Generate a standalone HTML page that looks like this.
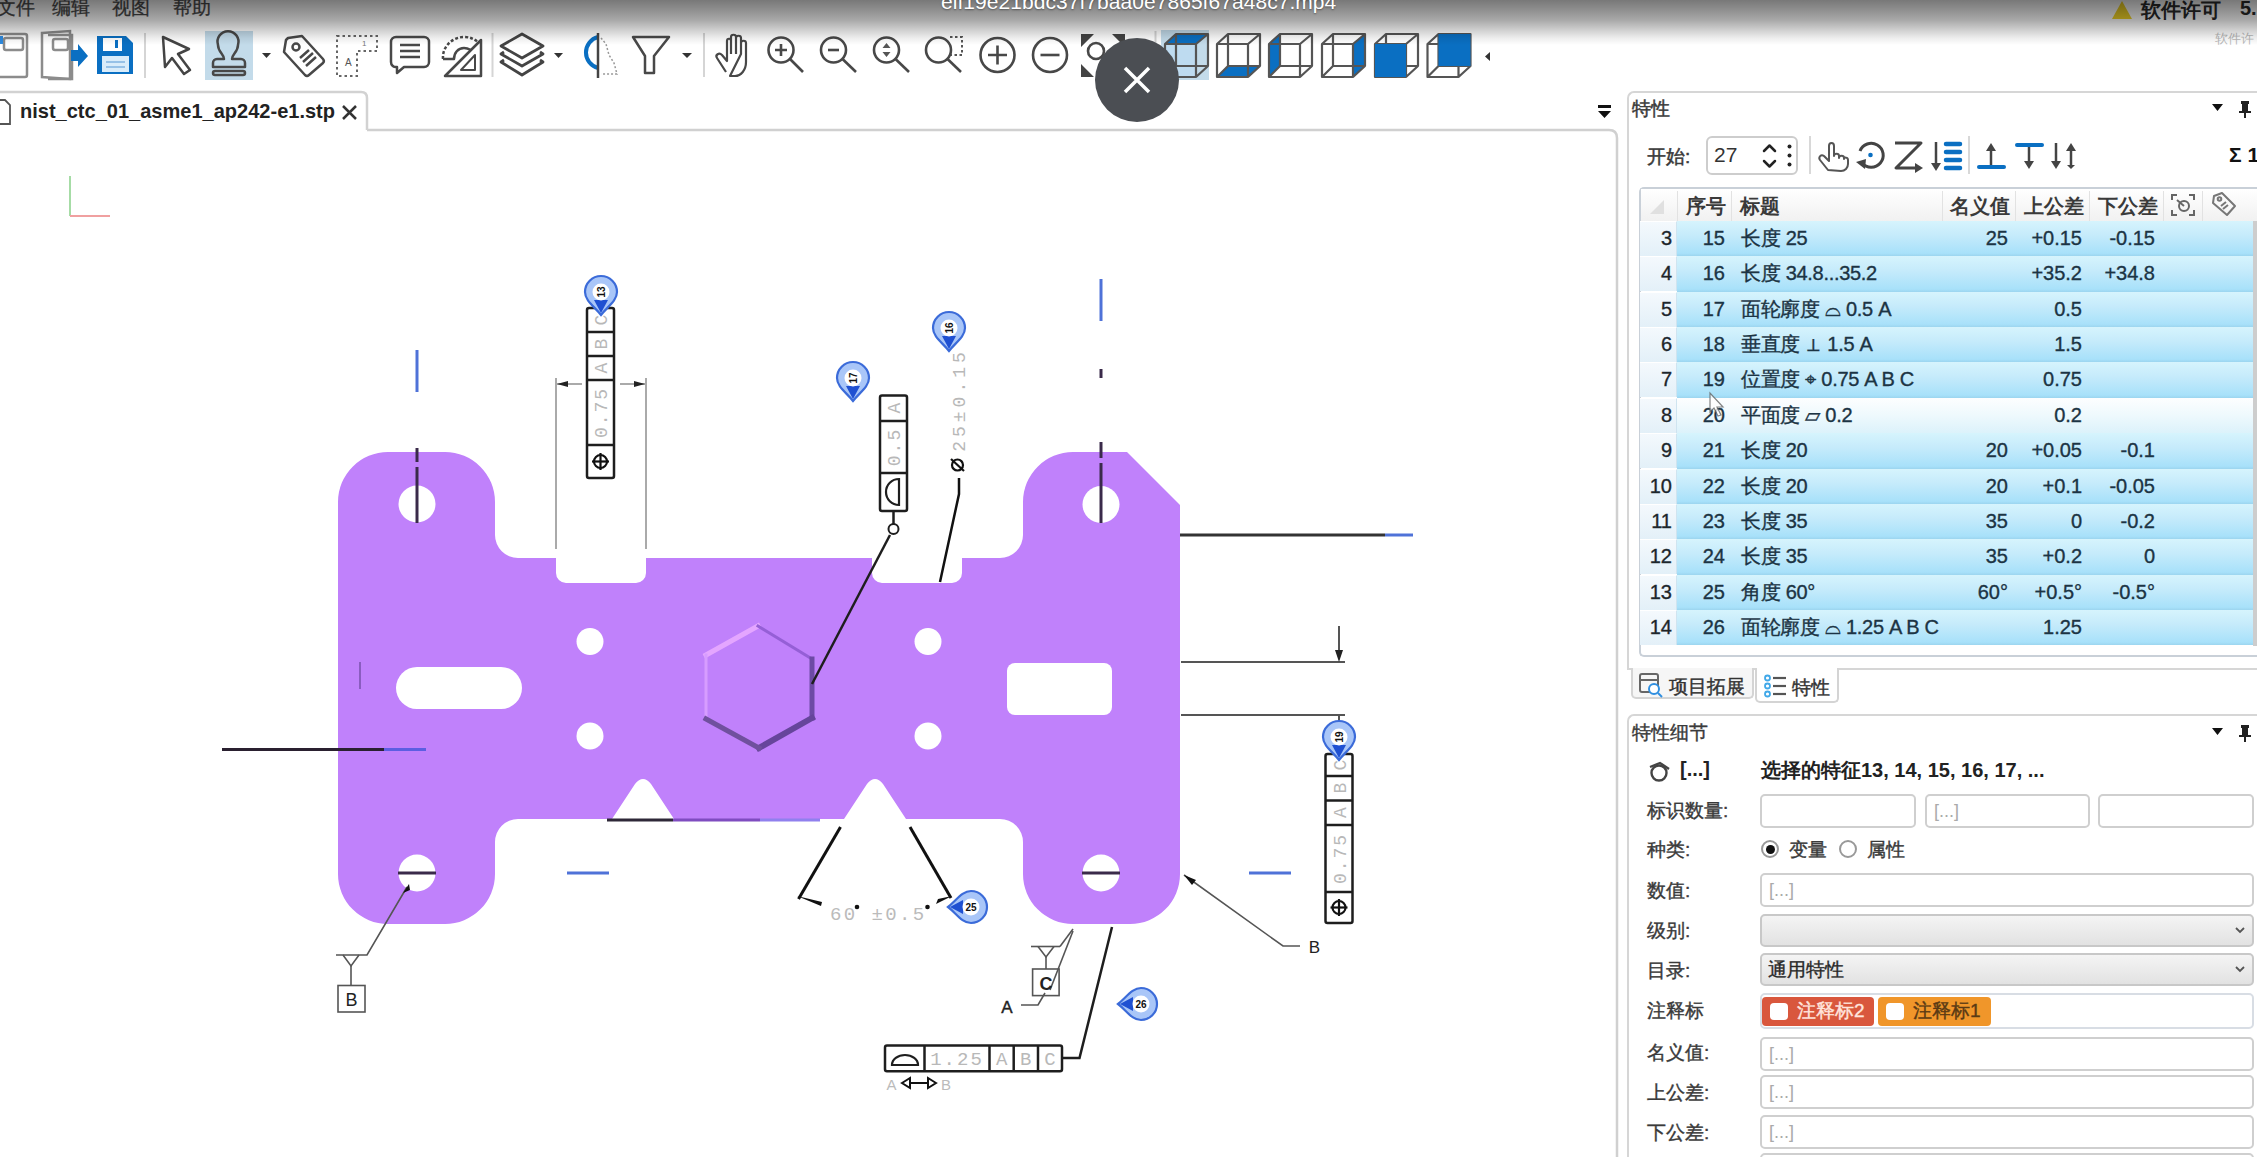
<!DOCTYPE html>
<html><head><meta charset="utf-8">
<style>
*{box-sizing:border-box;margin:0;padding:0}
html,body{width:2257px;height:1157px;overflow:hidden;background:#fff;font-family:"Liberation Sans",sans-serif;color:#333}
.a{position:absolute;white-space:nowrap}
svg{position:absolute;left:0;top:0}
#ov{position:absolute;left:0;top:0;width:2257px;height:46px;background:linear-gradient(to bottom,rgba(0,0,0,.53) 0px,rgba(0,0,0,.44) 10px,rgba(0,0,0,.34) 20px,rgba(0,0,0,.19) 30px,rgba(0,0,0,.07) 38px,rgba(0,0,0,0) 45px)}
</style></head><body>

<!-- DRAWING -->
<svg id="draw" width="2257" height="1157" viewBox="0 0 2257 1157">
<defs>
<g id="bd"><path d="M0,23 C-6,15 -16,9 -16,0 A16,16 0 1 1 16,0 C16,9 6,15 0,23Z" fill="#a9c6f8" stroke="#3b6bd9" stroke-width="2.2"/><path d="M-7,8 L0,21 L7,8Z" fill="#1f50d2"/><circle cx="0" cy="0" r="8.5" fill="#fff"/></g>
<g id="bl"><path d="M-23,0 C-15,-6 -9,-16 0,-16 A16,16 0 1 1 0,16 C-9,16 -15,6 -23,0Z" fill="#a9c6f8" stroke="#3b6bd9" stroke-width="2.2"/><path d="M-8,-7 L-21,0 L-8,7Z" fill="#1f50d2"/><circle cx="0" cy="0" r="8.5" fill="#fff"/></g>
</defs>
<!-- viewport border -->
<path d="M367,130 H1609 Q1617,130 1617,138 V1157" fill="none" stroke="#d0d0d0" stroke-width="2.5"/>
<!-- axes -->
<line x1="70" y1="176" x2="70" y2="216" stroke="#a6dca6" stroke-width="2"/>
<line x1="70" y1="216" x2="110" y2="216" stroke="#f0a0a0" stroke-width="2"/>
<!-- part -->
<path fill="#c081fb" d="M338,502 A50,50 0 0 1 388,452 H445 A50,50 0 0 1 495,502 V535 A23,23 0 0 0 518,558 H556 V573 A10,10 0 0 0 566,583 H636 A10,10 0 0 0 646,573 V558 H872 V573 A10,10 0 0 0 882,583 H952 A10,10 0 0 0 962,573 V558 H1000 A23,23 0 0 0 1023,535 V502 A50,50 0 0 1 1073,452 H1127 L1180,505 V874 A50,50 0 0 1 1130,924 H1073 A50,50 0 0 1 1023,874 V842 A23,23 0 0 0 1000,819 H906 L883,784 Q875,774 867,784 L844,819 H674 L651,784 Q643,774 635,784 L612,819 H518 A23,23 0 0 0 495,842 V874 A50,50 0 0 1 445,924 H388 A50,50 0 0 1 338,874 Z"/>
<g fill="#fff">
<circle cx="417" cy="504" r="18.5"/><circle cx="1101" cy="504.5" r="18.5"/>
<circle cx="417" cy="873" r="18.5"/><circle cx="1101" cy="873" r="18.5"/>
<circle cx="590" cy="641.5" r="13.5"/><circle cx="590" cy="736" r="13.5"/>
<circle cx="928" cy="641.5" r="13.5"/><circle cx="928" cy="736" r="13.5"/>
<rect x="396" y="667" width="126" height="42" rx="21"/>
<rect x="1007" y="663" width="105" height="52" rx="8"/>
</g>
<!-- hexagon -->
<g fill="none" stroke-linecap="square">
<line x1="706" y1="655" x2="758" y2="626" stroke="#e4a6ff" stroke-width="5"/>
<line x1="706" y1="655" x2="706" y2="719" stroke="#d79cff" stroke-width="3"/>
<line x1="758" y1="626" x2="812" y2="659" stroke="#955fd6" stroke-width="3"/>
<line x1="812" y1="659" x2="812" y2="718" stroke="#6d4aa5" stroke-width="5"/>
<line x1="812" y1="718" x2="759" y2="748" stroke="#66459b" stroke-width="6"/>
<line x1="759" y1="748" x2="706" y2="719" stroke="#70509e" stroke-width="5"/>
</g>
<!-- center lines -->
<g stroke="#3a2a4a" stroke-width="3">
<line x1="417" y1="448" x2="417" y2="462"/><line x1="417" y1="467" x2="417" y2="523"/>
<line x1="1101" y1="442" x2="1101" y2="458"/><line x1="1101" y1="463" x2="1101" y2="523"/>
<line x1="1101" y1="369" x2="1101" y2="378"/>
<line x1="398" y1="873" x2="436" y2="873"/><line x1="1082" y1="873" x2="1120" y2="873"/>
</g>
<g stroke="#4f72d8" stroke-width="3">
<line x1="417" y1="350" x2="417" y2="392"/>
<line x1="1101" y1="279" x2="1101" y2="321"/>
<line x1="567" y1="873" x2="609" y2="873"/>
<line x1="1249" y1="873" x2="1291" y2="873"/>
<line x1="384" y1="749.5" x2="426" y2="749.5" stroke="#5c5ee2"/>
<line x1="1385" y1="535" x2="1413" y2="535"/>
</g>
<line x1="222" y1="749.5" x2="384" y2="749.5" stroke="#2a2030" stroke-width="3"/>
<line x1="360" y1="662" x2="360" y2="689" stroke="#8a5cc0" stroke-width="2"/>
<line x1="1180" y1="535" x2="1385" y2="535" stroke="#333" stroke-width="3"/>
<line x1="607" y1="820" x2="673" y2="820" stroke="#2e2838" stroke-width="3"/><line x1="673" y1="820" x2="760" y2="820" stroke="#7f4cc0" stroke-width="3"/><line x1="760" y1="820" x2="820" y2="820" stroke="#9080ee" stroke-width="3"/>
<!-- right ext lines -->
<g stroke="#555" stroke-width="2" fill="none">
<line x1="1181" y1="662" x2="1345" y2="662"/>
<line x1="1181" y1="715" x2="1345" y2="715"/>
<line x1="1339" y1="626" x2="1339" y2="655"/>
<line x1="1339" y1="715" x2="1339" y2="728"/>
</g>
<path d="M1335,650 L1339,662 L1343,650Z" fill="#222"/>
<!-- FCF 13 dims -->
<g stroke="#aaa" stroke-width="2" fill="none">
<line x1="556" y1="378" x2="556" y2="549"/><line x1="646" y1="378" x2="646" y2="549"/>
<line x1="556" y1="384" x2="582" y2="384"/><line x1="620" y1="384" x2="646" y2="384"/>
</g>
<path d="M557,384 L568,381 L568,387Z M645,384 L634,381 L634,387Z" fill="#222"/>
<!-- FCF 13 -->
<g fill="none" stroke="#1e1e1e" stroke-width="2.5">
<rect x="587" y="308" width="27" height="170" rx="2"/>
<line x1="587" y1="332" x2="614" y2="332"/><line x1="587" y1="356" x2="614" y2="356"/>
<line x1="587" y1="380" x2="614" y2="380"/><line x1="587" y1="445" x2="614" y2="445"/>
</g>
<g fill="#b8b8b8" font-family="Liberation Mono" font-size="18" text-anchor="middle">
<text transform="translate(607,320) rotate(-90)">C</text>
<text transform="translate(607,344) rotate(-90)">B</text>
<text transform="translate(607,368) rotate(-90)">A</text>
<text transform="translate(607,412.5) rotate(-90)" letter-spacing="2">0.75</text>
</g>
<g stroke="#111" stroke-width="2.2" fill="none"><circle cx="600.5" cy="461.5" r="6.5"/><line x1="592" y1="461.5" x2="609" y2="461.5"/><line x1="600.5" y1="453" x2="600.5" y2="470"/></g>
<!-- FCF 19 -->
<g fill="none" stroke="#1e1e1e" stroke-width="2.5">
<rect x="1325.5" y="754" width="27" height="169" rx="2"/>
<line x1="1325.5" y1="776" x2="1352.5" y2="776"/><line x1="1325.5" y1="800.5" x2="1352.5" y2="800.5"/>
<line x1="1325.5" y1="825" x2="1352.5" y2="825"/><line x1="1325.5" y1="892" x2="1352.5" y2="892"/>
</g>
<g fill="#b8b8b8" font-family="Liberation Mono" font-size="18" text-anchor="middle">
<text transform="translate(1345.5,765) rotate(-90)">C</text>
<text transform="translate(1345.5,788) rotate(-90)">B</text>
<text transform="translate(1345.5,812.5) rotate(-90)">A</text>
<text transform="translate(1345.5,858.5) rotate(-90)" letter-spacing="2">0.75</text>
</g>
<g stroke="#111" stroke-width="2.2" fill="none"><circle cx="1339" cy="907.5" r="6.5"/><line x1="1330.5" y1="907.5" x2="1347.5" y2="907.5"/><line x1="1339" y1="899" x2="1339" y2="916"/></g>
<!-- FCF 17 -->
<g fill="none" stroke="#1e1e1e" stroke-width="2.5">
<rect x="880" y="395.5" width="27" height="115.5" rx="2"/>
<line x1="880" y1="421" x2="907" y2="421"/><line x1="880" y1="473" x2="907" y2="473"/>
<path d="M899,479 V505 A13,13 0 0 1 899,479 Z" stroke-width="2.2"/>
<line x1="893.5" y1="511" x2="893.5" y2="524"/>
<circle cx="893.5" cy="529" r="5" stroke-width="2"/>
<line x1="890" y1="535" x2="812" y2="684"/>
</g>
<g fill="#b8b8b8" font-family="Liberation Mono" font-size="18" text-anchor="middle">
<text transform="translate(900,408) rotate(-90)">A</text>
<text transform="translate(900,447) rotate(-90)" letter-spacing="2">0.5</text>
<text transform="translate(965,400) rotate(-90)" letter-spacing="4">25&#177;0.15</text>
</g>
<g stroke="#111" stroke-width="2.2" fill="none"><circle cx="957.5" cy="465" r="5.5"/><line x1="951" y1="459" x2="964" y2="471"/>
<path d="M959,478 V494 L940,582" stroke-width="2.5"/></g>
<!-- angle dim -->
<g stroke="#111" stroke-width="3" fill="none">
<line x1="840.5" y1="827" x2="798.5" y2="899"/>
<line x1="910" y1="827" x2="951" y2="898"/>
</g>
<path d="M797,896 L822,902 L821,906 Z M952,896 L938,899 L936,904Z" fill="#111"/>
<text x="830" y="920" font-family="Liberation Mono" font-size="19" fill="#bbb" letter-spacing="2.4">60 &#177;0.5</text>
<circle cx="857" cy="907" r="2.3" fill="#111"/><circle cx="927.5" cy="907" r="2.3" fill="#111"/>
<!-- datum B left -->
<g stroke="#555" stroke-width="1.6" fill="none">
<path d="M407,887 L367,955 H336"/>
<path d="M343,955 L351,966 L359,955"/>
<line x1="351" y1="966" x2="351" y2="985"/>
<rect x="338" y="985.5" width="27" height="26.5"/>
</g>
<path d="M403,893 L409,884 L410,890Z" fill="#111"/>
<text x="351.5" y="1006" font-size="18" text-anchor="middle" fill="#222">B</text>
<!-- leader B right -->
<path d="M1184,875 L1283,946 H1300" stroke="#555" stroke-width="1.6" fill="none"/>
<path d="M1184,875 L1196,880 L1192,885Z" fill="#111"/>
<text x="1314.5" y="953" font-size="17" text-anchor="middle" fill="#222">B</text>
<!-- datum C -->
<g stroke="#555" stroke-width="1.6" fill="none">
<line x1="1031" y1="946.5" x2="1060" y2="946.5"/>
<path d="M1038,946.5 L1046,957 L1054,946.5"/>
<line x1="1046" y1="957" x2="1046" y2="969"/>
<rect x="1032.6" y="969" width="26.5" height="26.6"/>
<path d="M1060,946.5 L1073,929"/><path d="M1050,990 L1073,931"/>
<path d="M1021,1005 H1038 L1045,993"/>
</g>
<text x="1046" y="990" font-size="18" font-weight="bold" text-anchor="middle" fill="#222">C</text>
<text x="1007" y="1013" font-size="17" text-anchor="middle" fill="#222" stroke="#222" stroke-width="0.4">A</text>
<!-- FCF bottom -->
<g fill="none" stroke="#1e1e1e" stroke-width="2.5">
<rect x="885" y="1045.6" width="177" height="25.7" rx="2"/>
<line x1="924.5" y1="1045.6" x2="924.5" y2="1071.3"/><line x1="989.5" y1="1045.6" x2="989.5" y2="1071.3"/>
<line x1="1013.7" y1="1045.6" x2="1013.7" y2="1071.3"/><line x1="1038" y1="1045.6" x2="1038" y2="1071.3"/>
<path d="M892,1065 A13,10 0 0 1 918,1065 Z" stroke-width="2.2"/>
<path d="M1062,1058 H1079.5 L1112,927"/>
</g>
<g fill="#b8b8b8" font-family="Liberation Mono" font-size="19" text-anchor="middle">
<text x="957" y="1065" letter-spacing="2">1.25</text>
<text x="1001.6" y="1065">A</text><text x="1025.8" y="1065">B</text><text x="1050" y="1065">C</text>
</g>
<text x="891.5" y="1090" font-size="15" fill="#bbb" text-anchor="middle">A</text>
<text x="946" y="1090" font-size="15" fill="#bbb" text-anchor="middle">B</text>
<path d="M902,1083 L910,1078 V1088Z M936,1083 L928,1078 V1088Z" fill="none" stroke="#111" stroke-width="2"/>
<line x1="909" y1="1083" x2="929" y2="1083" stroke="#111" stroke-width="2"/>
<!-- balloons -->
<g font-size="10" font-weight="bold" text-anchor="middle" fill="#111">
<g transform="translate(601,292)"><use href="#bd"/><text transform="rotate(-90)" y="3.5" x="0">13</text></g>
<g transform="translate(853,378)"><use href="#bd"/><text transform="rotate(-90)" y="3.5" x="0">17</text></g>
<g transform="translate(949,328)"><use href="#bd"/><text transform="rotate(-90)" y="3.5" x="0">16</text></g>
<g transform="translate(1339,737)"><use href="#bd"/><text transform="rotate(-90)" y="3.5" x="0">19</text></g>
<g transform="translate(971,907)"><use href="#bl"/><text x="0" y="3.5">25</text></g>
<g transform="translate(1141,1004)"><use href="#bl"/><text x="0" y="3.5">26</text></g>
</g>
</svg>

<!-- TOOLBAR -->
<svg id="tb" width="2257" height="135" viewBox="0 0 2257 135">
<defs>
<g id="cube" fill="none" stroke="#555" stroke-width="2.2" stroke-linejoin="round">
<path d="M0,10 H31 V43 H0Z M11,0 H43 V32 H11Z M0,10 L11,0 M31,10 L43,0 M31,43 L43,32 M0,43 L11,32"/>
</g>
</defs>
<g fill="#4a4a4a" font-size="19" stroke="#4a4a4a" stroke-width="0.3"><text x="-3" y="14">文件</text><text x="52" y="14">编辑</text><text x="112" y="14">视图</text><text x="173" y="14">帮助</text></g>
<!-- new -->
<g fill="none" stroke="#8c8c8c" stroke-width="2.5"><rect x="-3" y="34" width="30" height="43" rx="2"/><rect x="4" y="38" width="19" height="12" rx="2"/></g>
<rect x="0" y="36" width="3" height="8" fill="#2f8be0"/>
<!-- open -->
<g fill="none" stroke="#8c8c8c" stroke-width="2.5"><path d="M42,33 L70,31 V79 L42,77Z"/><path d="M48,35 H72 V79 H48"/><rect x="53" y="39" width="15" height="11" rx="2"/></g>
<path d="M71,50 H78 V44 L88,56 L78,67 V61 H71Z" fill="#0a6fc2"/>
<!-- save -->
<path d="M97,36 H126 L133,43 V74 H97Z" fill="#0a6fc2"/>
<rect x="103" y="38" width="19" height="13" fill="#fff"/><rect x="115" y="40" width="3" height="8" fill="#0a6fc2"/>
<rect x="102" y="56" width="27" height="16" fill="#d9ecfa"/>
<g stroke="#7fb3e0" stroke-width="1.5"><line x1="106" y1="62" x2="125" y2="62"/><line x1="106" y1="67" x2="125" y2="67"/></g>
<g stroke="#d5d5d5" stroke-width="2"><line x1="145" y1="33" x2="145" y2="78"/><line x1="492.5" y1="33" x2="492.5" y2="77"/><line x1="704" y1="33" x2="704" y2="77"/><line x1="1155.5" y1="31" x2="1155.5" y2="79"/><line x1="1809" y1="0" x2="1809" y2="0"/></g>
<!-- cursor -->
<path d="M163,37 L189,49 L178,54 L190,70 L184,74 L172,58 L165,67Z" fill="none" stroke="#444" stroke-width="2.5" stroke-linejoin="round"/>
<!-- stamp -->
<rect x="205" y="31" width="48" height="49" fill="#c3dbea"/>
<g fill="none" stroke="#484848" stroke-width="2.5" stroke-linejoin="round"><path d="M224,59 C224,54 218,52 218,45 A10.5,10.5 0 1 1 238,45 C238,52 232,54 232,59 H241 A4,4 0 0 1 245,63 V67 H213 V63 A4,4 0 0 1 217,59Z"/><path d="M215,71 H243 A2,2 0 0 1 243,75 H215 A2,2 0 0 1 215,71Z"/></g>
<g fill="#333"><path d="M262,53 H271 L266.5,58Z"/><path d="M554,53 H563 L558.5,58Z"/><path d="M682,53 H692 L687,58Z"/></g>
<!-- tag -->
<g fill="none" stroke="#484848" stroke-width="2.5" stroke-linejoin="round"><path d="M288,38 L302,36 L323,59 A3,3 0 0 1 323,63 L309,75 A3,3 0 0 1 305,75 L284,52 L286,40Z" transform="rotate(0)"/><circle cx="296" cy="47" r="3.5"/><path d="M300,58 L309,50 M303,62 L313,53 M306,66 L316,57"/></g>
<!-- dotted box -->
<g fill="none" stroke="#666" stroke-width="2" stroke-dasharray="2.5,3"><path d="M337,36 H377 V51 H357 V76 H337Z"/></g>
<text x="345" y="66" font-size="10" fill="#555">A</text><text x="362" y="46" font-size="8" fill="#777">1</text>
<!-- comment -->
<g fill="none" stroke="#484848" stroke-width="2.5" stroke-linejoin="round"><path d="M396,37 H424 A5,5 0 0 1 429,42 V62 A5,5 0 0 1 424,67 H404 L397,73 V67 A5,5 0 0 1 391,62 V42 A5,5 0 0 1 396,37Z"/><path d="M400,45 H420 M400,51 H420 M400,57 H420"/></g>
<!-- ruler -->
<g fill="none" stroke="#484848" stroke-width="2.5" stroke-linejoin="round"><path d="M481,40 V76 H445Z"/><path d="M475,55 V70 H461Z" stroke-width="2"/><path d="M443,59 C442,47 452,37 464,37 C470,37 474,39 478,42" stroke-dasharray="3,2"/><path d="M443,59 H454 C454,53 458,48 464,48 C467,48 469,49 471,50"/></g>
<!-- layers -->
<g fill="none" stroke="#444" stroke-width="2.8" stroke-linejoin="round"><path d="M522,34 L543,46 L522,58 L501,46Z"/><path d="M504,52 L501,54 L522,66 L543,54 L540,52"/><path d="M504,60 L501,62 L522,75 L543,62 L540,60"/></g>
<!-- section -->
<path d="M598,37 A16,16 0 0 0 598,68" fill="none" stroke="#0a6fc2" stroke-width="4"/>
<line x1="598" y1="33" x2="598" y2="78" stroke="#444" stroke-width="2.5"/>
<path d="M601,38 L606,44 L609,55 L614,63 L617,74 L601,74" fill="none" stroke="#999" stroke-width="1.5" stroke-dasharray="2,2"/>
<!-- funnel -->
<path d="M633,37 H669 L654,56 V73 H645 V56Z" fill="none" stroke="#484848" stroke-width="2.5" stroke-linejoin="round"/>
<!-- hand -->
<path d="M726,72 L717,58 C715,55 719,52 722,55 L727,61 V41 C727,38 731,38 731,41 V54 M731,54 V37 C731,34 736,34 736,37 V54 M736,54 V38 C736,35 741,35 741,38 V54 M741,54 V43 C741,40 746,40 746,43 V62 C746,70 741,76 735,76 H730Z" fill="none" stroke="#484848" stroke-width="2.2" stroke-linejoin="round"/>
<!-- zooms -->
<g fill="none" stroke="#484848" stroke-width="2.6">
<circle cx="781" cy="50" r="12.5"/><line x1="790" y1="59" x2="803" y2="72"/><path d="M775,50 H787 M781,44 V56"/>
<circle cx="833.5" cy="50" r="12.5"/><line x1="842.5" y1="59" x2="856" y2="72"/><path d="M828,50 H839"/>
<circle cx="886.5" cy="50" r="12.5"/><line x1="895.5" y1="59" x2="909" y2="72"/>
<circle cx="938.5" cy="50" r="12.5"/><line x1="947.5" y1="59" x2="961" y2="72"/>
<circle cx="997.5" cy="55" r="17"/><path d="M988,55 H1007 M997.5,45.5 V64.5"/>
<circle cx="1050" cy="55" r="17"/><path d="M1040.5,55 H1059.5"/>
<circle cx="1096" cy="51" r="8"/><line x1="1102" y1="57" x2="1112" y2="67"/>
</g>
<path d="M882.5,48 L886.5,43 L890.5,48Z M882.5,52 L886.5,57 L890.5,52Z" fill="#555"/>
<path d="M950,37 H962 V55 H951" fill="none" stroke="#555" stroke-width="2" stroke-dasharray="2.5,2.5"/>
<path d="M1081,34 H1094 L1081,47Z M1125,34 V47 L1112,34Z M1081,77 V64 L1094,77Z M1125,77 H1112 L1125,64Z" fill="#444"/>
<path d="M1143,52 V61 L1138,56.5Z M1490,52 V61 L1485,56.5Z" fill="#333"/>
<!-- cubes -->
<rect x="1161" y="30" width="48" height="50" fill="#c3dbea"/>
<g transform="translate(1165,34)"><path d="M0,10 H31 V43 H0Z" fill="#bcdcf2" opacity=".7"/><path d="M0,10 L11,0 H43 L31,10Z" fill="#0a6fc2"/><use href="#cube"/></g>
<g transform="translate(1217,34)"><path d="M0,43 L11,32 H43 L31,43Z" fill="#0a6fc2"/><use href="#cube"/></g>
<g transform="translate(1269,34)"><path d="M0,10 L11,0 V32 L0,43Z" fill="#0a6fc2"/><use href="#cube"/></g>
<g transform="translate(1322,34)"><path d="M31,10 L43,0 V32 L31,43Z" fill="#0a6fc2"/><use href="#cube"/></g>
<g transform="translate(1375,34)"><use href="#cube"/><path d="M0,10 H31 V43 H0Z" fill="#0a6fc2"/></g>
<g transform="translate(1427.5,34)"><use href="#cube"/><path d="M11,0 H43 V32 H11Z" fill="#0a6fc2"/></g>
<!-- tab -->
<path d="M-2,92 H361 Q367,92 367,98 V130" fill="none" stroke="#d2d2d2" stroke-width="2.5"/>
<path d="M-2,100 H5 L10,105 V124 H-2" fill="none" stroke="#555" stroke-width="1.8"/>
<text x="20" y="118" font-size="21" font-weight="bold" fill="#222" textLength="315" lengthAdjust="spacingAndGlyphs">nist_ctc_01_asme1_ap242-e1.stp</text>
<path d="M343,106 L356,119 M356,106 L343,119" stroke="#333" stroke-width="2.5"/>
<!-- panel menu icon -->
<path d="M1598,105 H1611 V108 H1598Z M1598,111 H1611 L1604.5,118Z" fill="#111"/>
</svg>

<!-- PANEL -->
<div id="panel">
<style>
.pt{font-size:19px;color:#333}
.rw{position:absolute;left:1677px;width:576px;height:35.4px;background:linear-gradient(to bottom,#d6f4fd 0%,#c6ebfb 40%,#a8e1fa 92%,#9cd5ef 100%)}
.rn{position:absolute;left:1640px;width:37px;height:35px;background:linear-gradient(to bottom,#f4f9fd,#e3f0f8);border-top:1px solid #fff;border-right:1px solid #cfe4f0}
.tx{position:absolute;font-size:20px;color:#1c3444;white-space:nowrap;line-height:35px;-webkit-text-stroke:0.35px #1c3444}
.lb{position:absolute;left:1647px;font-size:19px;color:#333;white-space:nowrap;line-height:20px;-webkit-text-stroke:0.4px #3a3a3a}
.in{position:absolute;border:2px solid #cfcfcf;border-radius:5px;background:#fff}
.ph{position:absolute;left:7px;top:5px;font-size:18px;color:#aaa}
.cb{position:absolute;border:2px solid #c8c8c8;border-radius:5px;background:linear-gradient(to bottom,#f4f4f4,#e2e2e2)}
</style>
<div class="a" style="left:1627px;top:91px;width:640px;height:579px;border:2px solid #d6d6d6;border-radius:7px 0 0 0;border-right:none"></div>
<div class="a pt" style="left:1632px;top:96px;color:#3a3a3a;-webkit-text-stroke:0.5px #3a3a3a">特性</div>
<div class="a pt" style="left:1647px;top:143.5px;color:#3a3a3a;-webkit-text-stroke:0.5px #3a3a3a">开始:</div>
<div class="a" style="left:1706px;top:136px;width:92px;height:39px;border:2px solid #cdcdcd;border-radius:6px"></div>
<div class="a" style="left:1714px;top:143px;font-size:21px;color:#333">27</div>
<div class="a" style="left:1809px;top:136px;width:2px;height:38px;background:#d8d8d8"></div>
<div class="a" style="left:1968px;top:136px;width:2px;height:38px;background:#d8d8d8"></div>
<div class="a" style="left:2229px;top:143px;font-size:21px;font-weight:bold;color:#111">Σ 1</div>
<div class="a" style="left:1639px;top:187px;width:620px;height:470px;border:2px solid #c9d0d8;border-radius:5px 0 0 5px;border-right:none;background:#fff"></div>
<div class="a" style="left:1641px;top:189px;width:616px;height:32px;background:linear-gradient(to bottom,#fff,#f1f1f1)"></div>
<div class="a" style="left:1677px;top:191px;width:1px;height:30px;background:#e2e2e2"></div>
<div class="a" style="left:1731px;top:191px;width:1px;height:30px;background:#e2e2e2"></div>
<div class="a" style="left:1942px;top:191px;width:1px;height:30px;background:#e2e2e2"></div>
<div class="a" style="left:2015px;top:191px;width:1px;height:30px;background:#e2e2e2"></div>
<div class="a" style="left:2089px;top:191px;width:1px;height:30px;background:#e2e2e2"></div>
<div class="a" style="left:2163px;top:191px;width:1px;height:30px;background:#e2e2e2"></div>
<div class="a" style="left:2202px;top:191px;width:1px;height:30px;background:#e2e2e2"></div>
<div class="a" style="left:1650px;top:200px;width:0;height:0;border-left:14px solid transparent;border-bottom:14px solid #e0e0e0"></div>
<div class="a" style="left:1686px;top:193px;font-size:20px;font-weight:bold;color:#3a3a3a">序号</div>
<div class="a" style="left:1740px;top:193px;font-size:20px;font-weight:bold;color:#3a3a3a">标题</div>
<div class="a" style="left:1950px;top:193px;font-size:20px;font-weight:bold;color:#3a3a3a">名义值</div>
<div class="a" style="left:2024px;top:193px;font-size:20px;font-weight:bold;color:#3a3a3a">上公差</div>
<div class="a" style="left:2098px;top:193px;font-size:20px;font-weight:bold;color:#3a3a3a">下公差</div>
<div class="rn" style="top:221.0px"></div>
<div class="rw" style="top:221.0px;"></div>
<div class="tx" style="top:221.0px;left:1640px;width:32px;text-align:right;color:#222">3</div>
<div class="tx" style="top:221.0px;left:1680px;width:45px;text-align:right">15</div>
<div class="tx" style="top:221.0px;left:1741px;letter-spacing:-0.3px">长度 25</div>
<div class="tx" style="top:221.0px;left:1940px;width:68px;text-align:right">25</div>
<div class="tx" style="top:221.0px;left:2010px;width:72px;text-align:right">+0.15</div>
<div class="tx" style="top:221.0px;left:2085px;width:70px;text-align:right">-0.15</div>
<div class="rn" style="top:256.4px"></div>
<div class="rw" style="top:256.4px;"></div>
<div class="tx" style="top:256.4px;left:1640px;width:32px;text-align:right;color:#222">4</div>
<div class="tx" style="top:256.4px;left:1680px;width:45px;text-align:right">16</div>
<div class="tx" style="top:256.4px;left:1741px;letter-spacing:-0.3px">长度 34.8...35.2</div>
<div class="tx" style="top:256.4px;left:1940px;width:68px;text-align:right"></div>
<div class="tx" style="top:256.4px;left:2010px;width:72px;text-align:right">+35.2</div>
<div class="tx" style="top:256.4px;left:2085px;width:70px;text-align:right">+34.8</div>
<div class="rn" style="top:291.7px"></div>
<div class="rw" style="top:291.7px;"></div>
<div class="tx" style="top:291.7px;left:1640px;width:32px;text-align:right;color:#222">5</div>
<div class="tx" style="top:291.7px;left:1680px;width:45px;text-align:right">17</div>
<div class="tx" style="top:291.7px;left:1741px;letter-spacing:-0.3px">面轮廓度 ⌓ 0.5 A</div>
<div class="tx" style="top:291.7px;left:1940px;width:68px;text-align:right"></div>
<div class="tx" style="top:291.7px;left:2010px;width:72px;text-align:right">0.5</div>
<div class="tx" style="top:291.7px;left:2085px;width:70px;text-align:right"></div>
<div class="rn" style="top:327.1px"></div>
<div class="rw" style="top:327.1px;"></div>
<div class="tx" style="top:327.1px;left:1640px;width:32px;text-align:right;color:#222">6</div>
<div class="tx" style="top:327.1px;left:1680px;width:45px;text-align:right">18</div>
<div class="tx" style="top:327.1px;left:1741px;letter-spacing:-0.3px">垂直度 ⊥ 1.5 A</div>
<div class="tx" style="top:327.1px;left:1940px;width:68px;text-align:right"></div>
<div class="tx" style="top:327.1px;left:2010px;width:72px;text-align:right">1.5</div>
<div class="tx" style="top:327.1px;left:2085px;width:70px;text-align:right"></div>
<div class="rn" style="top:362.4px"></div>
<div class="rw" style="top:362.4px;"></div>
<div class="tx" style="top:362.4px;left:1640px;width:32px;text-align:right;color:#222">7</div>
<div class="tx" style="top:362.4px;left:1680px;width:45px;text-align:right">19</div>
<div class="tx" style="top:362.4px;left:1741px;letter-spacing:-0.3px">位置度 ⌖ 0.75 A B C</div>
<div class="tx" style="top:362.4px;left:1940px;width:68px;text-align:right"></div>
<div class="tx" style="top:362.4px;left:2010px;width:72px;text-align:right">0.75</div>
<div class="tx" style="top:362.4px;left:2085px;width:70px;text-align:right"></div>
<div class="rn" style="top:397.8px"></div>
<div class="rw" style="top:397.8px;background:linear-gradient(to bottom,#fdfeff 0%,#eef9fd 50%,#dcf2fb 100%);"></div>
<div class="tx" style="top:397.8px;left:1640px;width:32px;text-align:right;color:#222">8</div>
<div class="tx" style="top:397.8px;left:1680px;width:45px;text-align:right">20</div>
<div class="tx" style="top:397.8px;left:1741px;letter-spacing:-0.3px">平面度 ▱ 0.2</div>
<div class="tx" style="top:397.8px;left:1940px;width:68px;text-align:right"></div>
<div class="tx" style="top:397.8px;left:2010px;width:72px;text-align:right">0.2</div>
<div class="tx" style="top:397.8px;left:2085px;width:70px;text-align:right"></div>
<div class="rn" style="top:433.2px"></div>
<div class="rw" style="top:433.2px;"></div>
<div class="tx" style="top:433.2px;left:1640px;width:32px;text-align:right;color:#222">9</div>
<div class="tx" style="top:433.2px;left:1680px;width:45px;text-align:right">21</div>
<div class="tx" style="top:433.2px;left:1741px;letter-spacing:-0.3px">长度 20</div>
<div class="tx" style="top:433.2px;left:1940px;width:68px;text-align:right">20</div>
<div class="tx" style="top:433.2px;left:2010px;width:72px;text-align:right">+0.05</div>
<div class="tx" style="top:433.2px;left:2085px;width:70px;text-align:right">-0.1</div>
<div class="rn" style="top:468.5px"></div>
<div class="rw" style="top:468.5px;"></div>
<div class="tx" style="top:468.5px;left:1640px;width:32px;text-align:right;color:#222">10</div>
<div class="tx" style="top:468.5px;left:1680px;width:45px;text-align:right">22</div>
<div class="tx" style="top:468.5px;left:1741px;letter-spacing:-0.3px">长度 20</div>
<div class="tx" style="top:468.5px;left:1940px;width:68px;text-align:right">20</div>
<div class="tx" style="top:468.5px;left:2010px;width:72px;text-align:right">+0.1</div>
<div class="tx" style="top:468.5px;left:2085px;width:70px;text-align:right">-0.05</div>
<div class="rn" style="top:503.9px"></div>
<div class="rw" style="top:503.9px;"></div>
<div class="tx" style="top:503.9px;left:1640px;width:32px;text-align:right;color:#222">11</div>
<div class="tx" style="top:503.9px;left:1680px;width:45px;text-align:right">23</div>
<div class="tx" style="top:503.9px;left:1741px;letter-spacing:-0.3px">长度 35</div>
<div class="tx" style="top:503.9px;left:1940px;width:68px;text-align:right">35</div>
<div class="tx" style="top:503.9px;left:2010px;width:72px;text-align:right">0</div>
<div class="tx" style="top:503.9px;left:2085px;width:70px;text-align:right">-0.2</div>
<div class="rn" style="top:539.2px"></div>
<div class="rw" style="top:539.2px;"></div>
<div class="tx" style="top:539.2px;left:1640px;width:32px;text-align:right;color:#222">12</div>
<div class="tx" style="top:539.2px;left:1680px;width:45px;text-align:right">24</div>
<div class="tx" style="top:539.2px;left:1741px;letter-spacing:-0.3px">长度 35</div>
<div class="tx" style="top:539.2px;left:1940px;width:68px;text-align:right">35</div>
<div class="tx" style="top:539.2px;left:2010px;width:72px;text-align:right">+0.2</div>
<div class="tx" style="top:539.2px;left:2085px;width:70px;text-align:right">0</div>
<div class="rn" style="top:574.6px"></div>
<div class="rw" style="top:574.6px;"></div>
<div class="tx" style="top:574.6px;left:1640px;width:32px;text-align:right;color:#222">13</div>
<div class="tx" style="top:574.6px;left:1680px;width:45px;text-align:right">25</div>
<div class="tx" style="top:574.6px;left:1741px;letter-spacing:-0.3px">角度 60°</div>
<div class="tx" style="top:574.6px;left:1940px;width:68px;text-align:right">60°</div>
<div class="tx" style="top:574.6px;left:2010px;width:72px;text-align:right">+0.5°</div>
<div class="tx" style="top:574.6px;left:2085px;width:70px;text-align:right">-0.5°</div>
<div class="rn" style="top:610.0px"></div>
<div class="rw" style="top:610.0px;"></div>
<div class="tx" style="top:610.0px;left:1640px;width:32px;text-align:right;color:#222">14</div>
<div class="tx" style="top:610.0px;left:1680px;width:45px;text-align:right">26</div>
<div class="tx" style="top:610.0px;left:1741px;letter-spacing:-0.3px">面轮廓度 ⌓ 1.25 A B C</div>
<div class="tx" style="top:610.0px;left:1940px;width:68px;text-align:right"></div>
<div class="tx" style="top:610.0px;left:2010px;width:72px;text-align:right">1.25</div>
<div class="tx" style="top:610.0px;left:2085px;width:70px;text-align:right"></div>
<div class="a" style="left:2253px;top:221px;width:4px;height:425px;background:#cdcdcd"></div>
<div class="a" style="left:1631px;top:668px;width:123px;height:31px;border:2px solid #d4d4d4;border-top:none;border-radius:0 0 5px 5px;background:#f6f6f6"></div>
<div class="a" style="left:1755px;top:668px;width:84px;height:35px;border:2px solid #d4d4d4;border-top:none;border-radius:0 0 5px 5px;background:#fff"></div>
<div class="a pt" style="left:1669px;top:674px;color:#333;-webkit-text-stroke:0.4px #333">项目拓展</div>
<div class="a pt" style="left:1792px;top:675px;color:#333;-webkit-text-stroke:0.4px #333">特性</div>
<div class="a" style="left:1627px;top:714px;width:640px;height:460px;border:2px solid #d6d6d6;border-radius:7px 0 0 0;border-right:none"></div>
<div class="a pt" style="left:1632px;top:720px;color:#3a3a3a;-webkit-text-stroke:0.4px #3a3a3a">特性细节</div>
<div class="a" style="left:1680px;top:758px;font-size:20px;font-weight:bold;color:#222">[...]</div>
<div class="a" style="left:1761px;top:757px;font-size:20px;font-weight:bold;color:#222">选择的特征13, 14, 15, 16, 17, ...</div>
<div class="lb" style="top:801px;color:#3a3a3a">标识数量:</div>
<div class="lb" style="top:840px;color:#3a3a3a">种类:</div>
<div class="lb" style="top:881px;color:#3a3a3a">数值:</div>
<div class="lb" style="top:921px;color:#3a3a3a">级别:</div>
<div class="lb" style="top:961px;color:#3a3a3a">目录:</div>
<div class="lb" style="top:1001px;color:#3a3a3a">注释标</div>
<div class="lb" style="top:1043px;color:#3a3a3a">名义值:</div>
<div class="lb" style="top:1083px;color:#3a3a3a">上公差:</div>
<div class="lb" style="top:1123px;color:#3a3a3a">下公差:</div>
<div class="in" style="left:1760px;top:794px;width:156px;height:34px"></div>
<div class="in" style="left:1925px;top:794px;width:165px;height:34px"><span class="ph">[...]</span></div>
<div class="in" style="left:2098px;top:794px;width:156px;height:34px"></div>
<div class="a" style="left:1761px;top:840px;width:18px;height:18px;border:2px solid #999;border-radius:50%"></div>
<div class="a" style="left:1765.5px;top:844.5px;width:9px;height:9px;background:#111;border-radius:50%"></div>
<div class="a lb" style="left:1789px;top:840px;color:#3a3a3a">变量</div>
<div class="a" style="left:1839px;top:840px;width:18px;height:18px;border:2px solid #999;border-radius:50%"></div>
<div class="a lb" style="left:1867px;top:840px;color:#3a3a3a">属性</div>
<div class="in" style="left:1760px;top:873px;width:494px;height:34px"><span class="ph">[...]</span></div>
<div class="cb" style="left:1760px;top:914px;width:494px;height:33px"></div>
<div class="cb" style="left:1760px;top:953px;width:494px;height:33px"></div>
<div class="a lb" style="left:1768px;top:960px;color:#222">通用特性</div>
<div class="in" style="left:1760px;top:993px;width:494px;height:36px;border-color:#d8dde4"></div>
<div class="a" style="left:1762px;top:997px;width:112px;height:29px;background:#d9573d;border-radius:4px"></div>
<div class="a" style="left:1878px;top:997px;width:113px;height:29px;background:#f0962a;border-radius:4px"></div>
<div class="a" style="left:1770px;top:1003px;width:18px;height:17px;background:#fff;border-radius:4px"></div>
<div class="a" style="left:1886px;top:1003px;width:18px;height:17px;background:#fff;border-radius:4px"></div>
<div class="a lb" style="left:1797px;top:1001px;color:#ffe4dc;-webkit-text-stroke:0.4px #ffe4dc;font-size:19px">注释标2</div>
<div class="a lb" style="left:1913px;top:1001px;color:#5a3a14;-webkit-text-stroke:0.4px #5a3a14;font-size:19px">注释标1</div>
<div class="in" style="left:1760px;top:1037px;width:494px;height:34px"><span class="ph">[...]</span></div>
<div class="in" style="left:1760px;top:1075px;width:494px;height:34px"><span class="ph">[...]</span></div>
<div class="in" style="left:1760px;top:1115px;width:494px;height:34px"><span class="ph">[...]</span></div>
<div class="in" style="left:1760px;top:1153px;width:494px;height:34px"></div>
<svg width="2257" height="1157" style="position:absolute;left:0;top:0">
<!-- spin arrows -->
<g fill="none" stroke="#222" stroke-width="2.5" stroke-linecap="round" stroke-linejoin="round"><path d="M1764,151 L1769.5,145.5 L1775,151"/><path d="M1764,161 L1769.5,166.5 L1775,161"/></g>
<g fill="#222"><circle cx="1789.5" cy="146.5" r="2"/><circle cx="1789.5" cy="155.5" r="2"/><circle cx="1789.5" cy="164.5" r="2"/></g>
<!-- hand -->
<path d="M1828,170 L1820,160 C1818,157 1821,154 1824,156 L1829,161 V146 C1829,142 1834,142 1834,146 V156 C1834,153 1839,153 1839,156 V158 C1839,155 1844,155 1844,158 V159 C1844,157 1848,157 1848,160 V164 C1848,168 1845,171 1841,171Z" fill="none" stroke="#555" stroke-width="2" stroke-linejoin="round"/>
<!-- rotate -->
<path d="M1862,163 A12,12 0 1 0 1860,151" fill="none" stroke="#444" stroke-width="3"/>
<path d="M1856,162 L1866,159 L1865,169Z" fill="#444"/><circle cx="1870.5" cy="155" r="2.3" fill="#0a6fc2"/>
<!-- Z arrow -->
<path d="M1895,143 H1921 L1896,168 H1917" fill="none" stroke="#444" stroke-width="3" stroke-linejoin="round"/>
<path d="M1915,163 L1923,168 L1915,173Z" fill="#444"/>
<!-- down arrow + lines -->
<line x1="1936" y1="142" x2="1936" y2="166" stroke="#444" stroke-width="2.5"/><path d="M1931,163 L1936,171 L1941,163Z" fill="#444"/>
<g stroke="#0a6fc2" stroke-width="4.5" stroke-linecap="round"><line x1="1946" y1="144" x2="1960" y2="144"/><line x1="1946" y1="152" x2="1960" y2="152"/><line x1="1946" y1="160" x2="1960" y2="160"/><line x1="1946" y1="168" x2="1960" y2="168"/></g>
<!-- up arrow baseline -->
<line x1="1991" y1="147" x2="1991" y2="165" stroke="#444" stroke-width="2.5"/><path d="M1986,151 L1991,143 L1996,151Z" fill="#444"/>
<line x1="1979" y1="167" x2="2004" y2="167" stroke="#0a6fc2" stroke-width="4" stroke-linecap="round"/>
<line x1="2017" y1="145" x2="2042" y2="145" stroke="#0a6fc2" stroke-width="4" stroke-linecap="round"/>
<line x1="2029" y1="147" x2="2029" y2="165" stroke="#444" stroke-width="2.5"/><path d="M2024,161 L2029,169 L2034,161Z" fill="#444"/>
<line x1="2056" y1="143" x2="2056" y2="165" stroke="#444" stroke-width="2.5"/><path d="M2051,161 L2056,169 L2061,161Z" fill="#444"/>
<line x1="2071" y1="147" x2="2071" y2="167" stroke="#444" stroke-width="2.5"/><path d="M2066,151 L2071,143 L2076,151Z" fill="#444"/><path d="M2067,165 H2075 L2071,169Z" fill="#444"/>
<!-- panel header icons -->
<path d="M2212,104 H2223 L2217.5,111Z M2212,728 H2223 L2217.5,735Z" fill="#111"/>
<g fill="#222"><path d="M2241,101 H2249 V104 H2248 V111 H2251 V113 H2246 V118 H2244 V113 H2239 V111 H2242 V104 H2241Z"/><path d="M2241,725 H2249 V728 H2248 V735 H2251 V737 H2246 V742 H2244 V737 H2239 V735 H2242 V728 H2241Z"/></g>
<!-- header icons -->
<g fill="none" stroke="#666" stroke-width="2"><path d="M2172,200 V195 H2177 M2189,195 H2194 V200 M2194,210 V215 H2189 M2177,215 H2172 V210"/><circle cx="2184" cy="206" r="5"/><path d="M2177,200 L2184,206"/></g>
<g fill="none" stroke="#777" stroke-width="2" stroke-linejoin="round"><path d="M2214,196 L2222,193 L2235,206 L2227,215 L2213,203Z"/><circle cx="2219.5" cy="199" r="1.8"/><path d="M2221,206 L2226,202 M2223,209 L2228,205"/></g>
<!-- tab icons -->
<g fill="none" stroke="#666" stroke-width="2"><rect x="1640" y="674" width="18" height="18" rx="2"/><line x1="1640" y1="680" x2="1658" y2="680"/></g>
<circle cx="1654" cy="689" r="5" fill="#fff" stroke="#2f8fe0" stroke-width="2"/><line x1="1658" y1="693" x2="1662" y2="697" stroke="#2f8fe0" stroke-width="2"/>
<g fill="none" stroke="#40a8e8" stroke-width="1.8"><circle cx="1767.5" cy="678" r="2.5"/><circle cx="1767.5" cy="686" r="2.5"/><circle cx="1767.5" cy="694" r="2.5"/></g>
<g stroke="#555" stroke-width="2.2"><line x1="1773" y1="678" x2="1786" y2="678"/><line x1="1773" y1="686" x2="1786" y2="686"/><line x1="1773" y1="694" x2="1786" y2="694"/></g>
<!-- detail icon -->
<g fill="none" stroke="#444" stroke-width="2.4"><circle cx="1659" cy="773" r="7.5"/><path d="M1650,767 L1660,763 L1669,769"/></g>
<!-- chevrons -->
<g fill="none" stroke="#555" stroke-width="1.8"><path d="M2236,928 L2240,932 L2244,928"/><path d="M2236,967 L2240,971 L2244,967"/></g>
<!-- mouse cursor -->
<path d="M1710,393 L1710,412 L1714,408 L1718,416 L1721,415 L1717,407 L1723,407Z" fill="#fff" stroke="#666" stroke-width="1.2" opacity=".8"/>
</svg>
<div class="a" style="left:2141px;top:-3px;font-size:20px;font-weight:bold;color:#2a2a2a">软件许可</div>
<div class="a" style="left:2240px;top:-3px;font-size:20px;font-weight:bold;color:#2a2a2a">5.</div>
<div class="a" style="left:2215px;top:30px;font-size:13px;color:#bbb">软件许</div>
<svg width="2257" height="40" style="position:absolute;left:0;top:0"><path d="M2112,19 L2122,1 L2132,19Z" fill="#f2d428"/></svg>
</div>

<div id="ov"></div>
<div class="a" style="left:941px;top:-10px;font-size:21px;color:#fff;letter-spacing:0.05px;text-shadow:0 1px 2px rgba(0,0,0,.4)">elf19e21bdc37f7baa0e7865f67a48c7.mp4</div>
<svg width="2257" height="1157" style="pointer-events:none"><circle cx="1137" cy="80" r="42" fill="#4b4e53"/><path d="M1125,68 L1149,92 M1149,68 L1125,92" stroke="#fff" stroke-width="3.5"/></svg>

</body></html>
